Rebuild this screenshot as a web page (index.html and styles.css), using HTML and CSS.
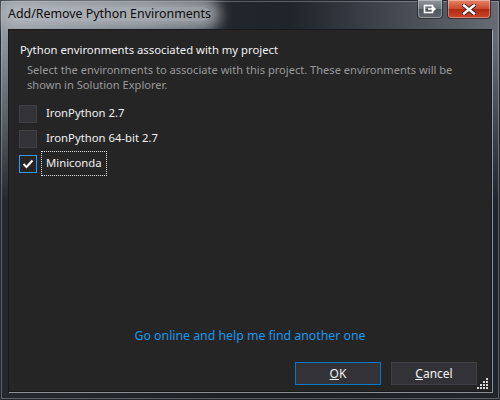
FILE: index.html
```html
<!DOCTYPE html>
<html>
<head>
<meta charset="utf-8">
<link rel="stylesheet" href="styles.css">
</head>
<body>
<div class="window">
  <div class="titlebar">
    <span class="title">Add/Remove Python Environments</span>
    <div class="caption-buttons">
      <div class="cap-btn restore">
        <svg width="14" height="10" viewBox="0 0 14 10"><rect x="1.5" y="1.5" width="8" height="7" fill="none" stroke="#fff" stroke-width="1.6"/><path d="M5 5 H12 M9.5 2.8 L12 5 L9.5 7.2" fill="none" stroke="#fff" stroke-width="1.4"/></svg>
      </div>
      <div class="cap-btn close">
        <svg width="14" height="11" viewBox="0 0 14 11"><path d="M2 1.5 L12 9.5 M12 1.5 L2 9.5" stroke="#3a1a14" stroke-width="4.2" stroke-linecap="square"/><path d="M2 1.5 L12 9.5 M12 1.5 L2 9.5" stroke="#fff" stroke-width="2.4" stroke-linecap="square"/></svg>
      </div>
    </div>
  </div>
  <div class="client">
    <div class="heading">Python environments associated with my project</div>
    <div class="desc">Select the environments to associate with this project. These environments will be shown in Solution Explorer.</div>
    <div class="envs">
      <div class="env"><span class="box"></span><span class="label">IronPython 2.7</span></div>
      <div class="env"><span class="box"></span><span class="label">IronPython 64-bit 2.7</span></div>
      <div class="env"><span class="box checked"><svg width="12" height="10" viewBox="0 0 12 10"><path d="M1.5 5 L4.5 8 L10.5 1.5" fill="none" stroke="#fff" stroke-width="2"/></svg></span><span class="label focus">Miniconda</span></div>
    </div>
    <div class="link">Go online and help me find another one</div>
    <div class="buttons">
      <div class="btn default"><u>O</u>K</div>
      <div class="btn"><u>C</u>ancel</div>
    </div>
    <svg class="grip" width="12" height="12" viewBox="0 0 12 12" fill="#d8d8d8">
      <rect x="9" y="0" width="2" height="2"/>
      <rect x="6" y="3" width="2" height="2"/><rect x="9" y="3" width="2" height="2"/>
      <rect x="3" y="6" width="2" height="2"/><rect x="6" y="6" width="2" height="2"/><rect x="9" y="6" width="2" height="2"/>
      <rect x="0" y="9" width="2" height="2"/><rect x="3" y="9" width="2" height="2"/><rect x="6" y="9" width="2" height="2"/><rect x="9" y="9" width="2" height="2"/>
    </svg>
  </div>
</div>
</body>
</html>
```
FILE: styles.css
```css
html, body {
  margin: 0;
  padding: 0;
  background: #000;
}
.window {
  width: 500px;
  height: 400px;
  box-sizing: border-box;
  display: flex;
  flex-direction: column;
  border: 1px solid #23272d;
  box-shadow: inset 0 0 0 1px rgba(200, 206, 214, 0.35);
  background:
    linear-gradient(180deg, rgba(0,0,0,0) 0px, rgba(0,0,0,0) 40px, rgba(28,31,36,0.92) 200px),
    linear-gradient(90deg, #8f959d 0%, #5c626a 30%, #22262d 45%, #1f232a 58%, #3d424a 75%, #676c74 100%);
  font-family: "Noto Sans", "Liberation Sans", sans-serif;
}
.titlebar {
  height: 28px;
  flex: none;
  display: flex;
  align-items: flex-start;
  justify-content: space-between;
}
.title {
  margin: 6px 0 0 7px;
  font-family: "Noto Sans", sans-serif;
  font-size: 12.4px;
  line-height: 14px;
  color: #0c0c0c;
  background: rgba(186, 191, 198, 0.75);
  border-radius: 10px;
  box-shadow: 0 0 14px 9px rgba(186, 191, 198, 0.75);
}
.caption-buttons {
  display: flex;
  gap: 4px;
  margin-right: 8px;
  margin-top: -1px;
}
.cap-btn {
  height: 19px;
  box-sizing: border-box;
  display: flex;
  align-items: center;
  justify-content: center;
  border: 1px solid rgba(40, 44, 50, 0.9);
  border-top: none;
  border-radius: 0 0 4px 4px;
  box-shadow: inset 0 0 0 1px rgba(255,255,255,0.35);
}
.restore {
  width: 26px;
  background: linear-gradient(180deg, #8d939b 0%, #6d737b 50%, #50565e 52%, #5f656d 100%);
}
.close {
  width: 44px;
  background: linear-gradient(180deg, #e48468 0%, #cc4a30 48%, #b02a10 52%, #c8442a 100%);
}
.client {
  position: relative;
  flex: 1;
  margin: 0 7px 7px 7px;
  background: #252526;
  border: 1px solid #17191c;
  box-shadow: 1px 1px 0 rgba(210, 216, 222, 0.6);
  display: flex;
  flex-direction: column;
  padding: 0 14px 6px 10px;
  font-size: 11px;
}
.heading {
  margin-top: 12px;
  padding-left: 1px;
  color: #f1f1f1;
  font-size: 11.3px;
  line-height: 16px;
}
.desc {
  margin: 4px 0 0 8px;
  color: #999999;
  font-size: 11.1px;
  line-height: 15px;
  padding-right: 10px;
}
.envs {
  margin-top: 12px;
  display: flex;
  flex-direction: column;
  gap: 6px;
}
.env {
  display: flex;
  align-items: center;
  gap: 4px;
  height: 19px;
}
.box {
  width: 18px;
  height: 18px;
  box-sizing: border-box;
  background: #333337;
  border: 1px solid #3f3f46;
  display: flex;
  align-items: center;
  justify-content: center;
}
.box.checked {
  background: #252526;
  border-color: #3399ff;
}
.label {
  color: #f1f1f1;
  padding: 3px 4px 4px 4px;
  border: 1px dotted transparent;
  line-height: 16px;
  font-size: 11.3px;
}
.label.focus {
  border-color: #e0e0e0;
}
.link {
  margin-top: auto;
  text-align: center;
  color: #1c97ea;
  font-size: 12.3px;
  line-height: 16px;
  padding-left: 4px;
}
.buttons {
  margin-top: 18px;
  display: flex;
  justify-content: flex-end;
  gap: 10px;
}
.btn {
  width: 86px;
  height: 23px;
  box-sizing: border-box;
  background: #333337;
  border: 1px solid #3f3f46;
  color: #f1f1f1;
  font-size: 12px;
  display: flex;
  align-items: center;
  justify-content: center;
}
.btn.default {
  border-color: #007acc;
}
.grip {
  position: absolute;
  right: 2px;
  bottom: 1px;
}
```
